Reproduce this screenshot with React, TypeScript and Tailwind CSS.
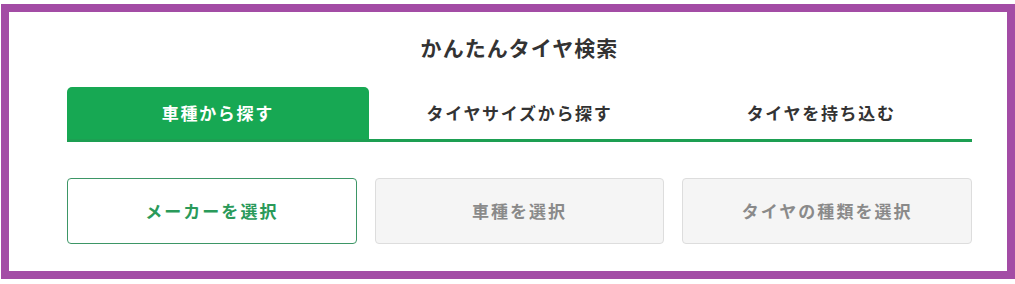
import React from "react";

const font = { fontFamily: '"Noto Sans CJK JP", "Noto Sans", sans-serif' };

export default function App() {
  const tabs = ["車種から探す", "タイヤサイズから探す", "タイヤを持ち込む"];
  return (
    <div className="w-[1015px] h-[284px] bg-white pt-[4px] pl-[1px]" style={font}>
      <div className="w-[1014px] h-[275px] border-[8px] border-[#a34ca5] bg-white pl-[58px] pr-[35px]">
        <div className="pt-[20px] h-[75px] text-center">
          <h2 className="text-[21px] leading-[30px] font-bold tracking-[0.05em] text-[#333]">かんたんタイヤ検索</h2>
        </div>
        <div className="flex border-b-[3px] border-[#1d9f52]">
          {tabs.map((t, i) => (
            <div
              key={t}
              className={
                i === 0
                  ? "flex-1 h-[52px] flex items-center justify-center rounded-t-[5px] bg-[#17a853] text-white text-[17px] font-bold tracking-[0.1em]"
                  : "flex-1 h-[52px] flex items-center justify-center text-[#333] text-[17px] font-bold tracking-[0.1em]"
              }
            >
              {t}
            </div>
          ))}
        </div>
        <div className="mt-[36px] grid grid-cols-3 gap-[18px]">
          <div className="h-[66px] rounded-[4px] border border-[#3d9666] bg-white flex items-center justify-center text-[17px] font-bold tracking-[0.12em] text-[#2a9a5a]">
            メーカーを選択
          </div>
          <div className="h-[66px] rounded-[4px] border border-[#dddddd] bg-[#f5f5f5] flex items-center justify-center text-[17px] font-bold tracking-[0.12em] text-[#8a8a8a]">
            車種を選択
          </div>
          <div className="h-[66px] rounded-[4px] border border-[#dddddd] bg-[#f5f5f5] flex items-center justify-center text-[17px] font-bold tracking-[0.12em] text-[#8a8a8a]">
            タイヤの種類を選択
          </div>
        </div>
      </div>
    </div>
  );
}
